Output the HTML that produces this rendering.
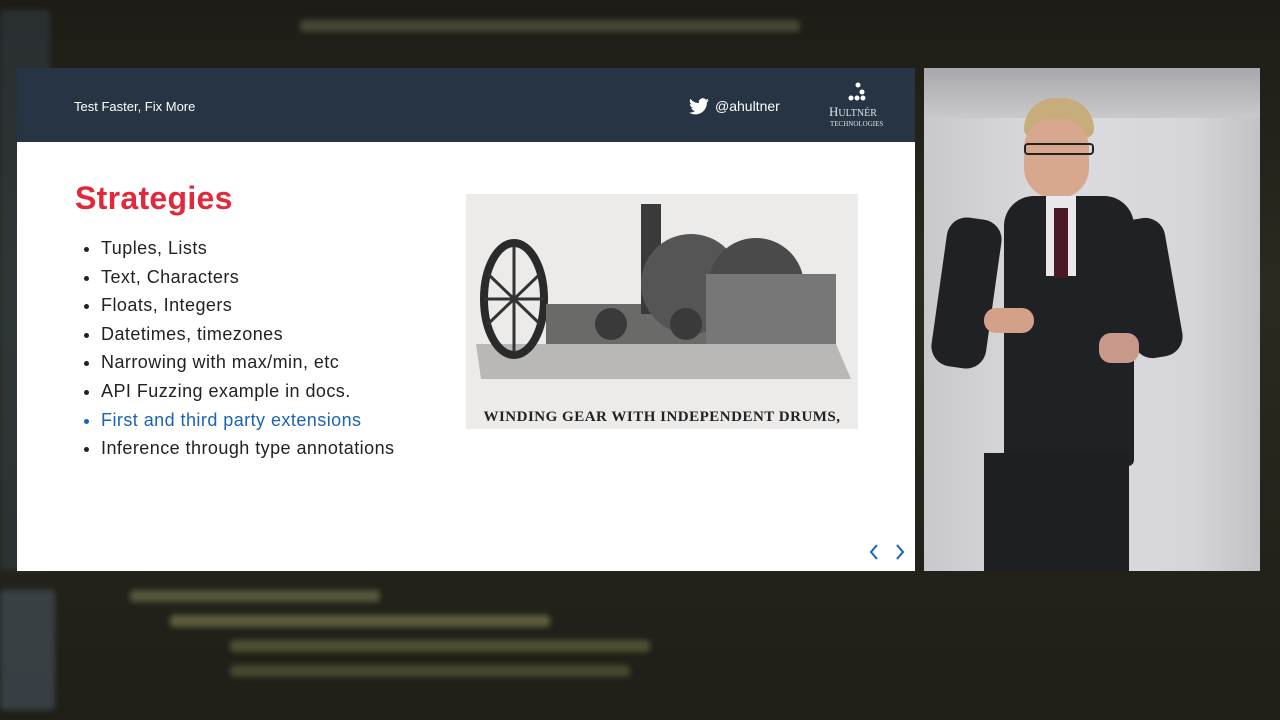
<!DOCTYPE html>
<html><head><style>
body{margin:0;width:1280px;height:720px;overflow:hidden;background:#17150f;font-family:"Liberation Sans",sans-serif;position:relative}
.bg{position:absolute;inset:0;background:linear-gradient(180deg,#1d1c16 0%,#2a2a20 40%,#1f1e17 100%)}
.code{position:absolute;height:12px;border-radius:4px;filter:blur(3px);opacity:.5}
.slide{position:absolute;left:17px;top:68px;width:898px;height:503px;background:#fff}
.hdr{position:absolute;left:0;top:0;width:898px;height:74px;background:#263443;color:#fff}
.t{position:absolute;font-size:13px}
h1{position:absolute;left:58px;margin:0;color:#e2283a;font-size:32px;font-weight:bold;top:112px;letter-spacing:.3px}
ul{position:absolute;left:66px;top:166px;margin:0;padding:0 0 0 18px;font-size:18px;color:#222;line-height:28.6px;letter-spacing:.45px}
.vid{position:absolute;left:924px;top:68px;width:336px;height:503px;background:linear-gradient(90deg,#c9c9cc,#dcdce0 40%,#d6d6da 80%,#c2c2c6)}
</style></head><body>
<div class="bg"></div>
<div class="code" style="left:130px;top:590px;width:250px;background:#8a8a60"></div>
<div class="code" style="left:170px;top:615px;width:380px;background:#9a9a60"></div>
<div class="code" style="left:230px;top:640px;width:420px;background:#7a8050"></div>
<div class="code" style="left:230px;top:665px;width:400px;background:#707048"></div>
<div class="code" style="left:0px;top:590px;width:55px;height:120px;background:#506070"></div>
<div class="code" style="left:300px;top:20px;width:500px;background:#707050"></div>
<div class="code" style="left:0px;top:10px;width:50px;height:560px;background:#3a4a5a;opacity:.4"></div>
<div class="slide">
 <div class="hdr">
  <div class="t" style="left:57px;top:31px">Test Faster, Fix More</div>
  <svg style="position:absolute;left:672px;top:30px" width="20" height="17" viewBox="0 0 24 20"><path fill="#fff" d="M24 2.4a10 10 0 0 1-2.8.8A5 5 0 0 0 23.3.5a10 10 0 0 1-3.1 1.2A4.9 4.9 0 0 0 11.8 6 14 14 0 0 1 1.7.9a4.9 4.9 0 0 0 1.5 6.6A4.9 4.9 0 0 1 1 6.9a4.9 4.9 0 0 0 3.9 4.8 5 5 0 0 1-2.2.1 4.9 4.9 0 0 0 4.6 3.4A9.9 9.9 0 0 1 0 17.2 14 14 0 0 0 7.5 19.5c9.1 0 14-7.5 14-14v-.6A10 10 0 0 0 24 2.4z"/></svg>
  <div class="t" style="left:698px;top:30px;font-size:14px">@ahultner</div>
  <svg style="position:absolute;left:830px;top:13px" width="22" height="22"><circle cx="11" cy="4" r="2.5" fill="#fff"/><circle cx="15" cy="11" r="2.5" fill="#fff"/><circle cx="4" cy="17" r="2.5" fill="#fff"/><circle cx="10" cy="17" r="2.5" fill="#fff"/><circle cx="16" cy="17" r="2.5" fill="#fff"/></svg>
  <div style="position:absolute;left:812px;top:36px;font-family:'Liberation Serif',serif;font-size:13px;color:#dfe3e8">H<span style="font-size:10px">ULTNÉR</span></div>
  <div style="position:absolute;left:813px;top:52px;font-family:'Liberation Serif',serif;font-size:7px;color:#dfe3e8">TECHNOLOGIES</div>
 </div>
 <h1>Strategies</h1>
 <ul><li>Tuples, Lists</li><li>Text, Characters</li><li>Floats, Integers</li><li>Datetimes, timezones</li><li>Narrowing with max/min, etc</li><li>API Fuzzing example in docs.</li><li style="color:#1a63b8">First and third party extensions</li><li>Inference through type annotations</li></ul>
 <div style="position:absolute;left:449px;top:126px;width:392px;height:235px;background:#ecebea">
  <svg width="392" height="200" viewBox="0 0 392 200">
   <path d="M10 150 L370 150 L385 185 L15 185 Z" fill="#b9b8b6"/>
   <ellipse cx="48" cy="105" rx="30" ry="56" fill="none" stroke="#2a2a2a" stroke-width="8"/>
   <g stroke="#333" stroke-width="3"><line x1="48" y1="52" x2="48" y2="158"/><line x1="22" y1="80" x2="74" y2="130"/><line x1="22" y1="130" x2="74" y2="80"/><line x1="18" y1="105" x2="78" y2="105"/></g>
   <rect x="80" y="110" width="290" height="40" fill="#6a6a68"/>
   <rect x="175" y="10" width="20" height="110" fill="#3a3a3a"/>
   <circle cx="225" cy="90" r="50" fill="#555"/><circle cx="290" cy="92" r="48" fill="#4a4a4a"/>
   <rect x="240" y="80" width="130" height="70" fill="#777"/>
   <circle cx="145" cy="130" r="16" fill="#3a3a3a"/><circle cx="220" cy="130" r="16" fill="#3a3a3a"/>
  </svg>
  <div style="position:absolute;left:0;right:0;top:215px;text-align:center;font-family:'Liberation Serif',serif;font-size:15px;font-weight:bold;color:#222;letter-spacing:.5px">WINDING GEAR WITH INDEPENDENT DRUMS,</div>
 </div>
 <svg style="position:absolute;left:852px;top:476px" width="40" height="16"><path d="M8 1 L2 8 L8 15 M28 1 L34 8 L28 15" fill="none" stroke="#1a63b8" stroke-width="2"/></svg>
</div>
<div class="vid">
 <div style="position:absolute;left:0;top:0;width:336px;height:50px;background:linear-gradient(#a8a8ac,#c9c9cc)"></div>
 <div style="position:absolute;left:100px;top:30px;width:70px;height:40px;border-radius:35px 35px 10px 10px;background:#c8ad7c"></div>
 <div style="position:absolute;left:100px;top:50px;width:65px;height:80px;border-radius:30px;background:#d8a88e"></div>
 <div style="position:absolute;left:100px;top:75px;width:70px;height:12px;border:2px solid #222;border-radius:4px;box-sizing:border-box"></div>
 <div style="position:absolute;left:80px;top:128px;width:130px;height:270px;background:#1f2125;border-radius:30px 30px 6px 6px"></div>
 <div style="position:absolute;left:15px;top:150px;width:55px;height:150px;background:#1f2125;border-radius:20px;transform:rotate(8deg)"></div>
 <div style="position:absolute;left:200px;top:150px;width:50px;height:140px;background:#1f2125;border-radius:20px;transform:rotate(-10deg)"></div>
 <div style="position:absolute;left:122px;top:128px;width:30px;height:80px;background:#e8e8ea"></div>
 <div style="position:absolute;left:130px;top:140px;width:14px;height:70px;background:#4a1a24"></div>
 <div style="position:absolute;left:60px;top:240px;width:50px;height:25px;background:#d4a08a;border-radius:12px"></div>
 <div style="position:absolute;left:175px;top:265px;width:40px;height:30px;background:#c8988a;border-radius:12px"></div>
 <div style="position:absolute;left:60px;top:385px;width:145px;height:118px;background:#1d1f22"></div>
</div>
</body></html>
